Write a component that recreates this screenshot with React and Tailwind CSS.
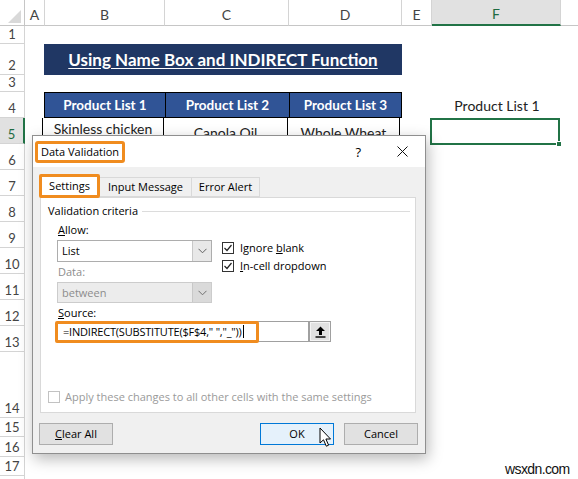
import React from 'react';

const ORANGE = 'border-[#f08c1f]';

const ColHead = ({ w, active, children }) => (
  <div
    className={`${w} shrink-0 flex items-end justify-center pb-[3px] leading-[14px] text-[14px] border-r border-[#d4d4d4] ${
      active ? 'bg-[#e1e1e1] border-b-2 border-b-[#217346] text-[#1e6b41]' : 'border-b border-b-[#c6c6c6] text-[#444]'
    }`}
  >
    {children}
  </div>
);

const Row = ({ n, h, active, children }) => (
  <div className={`flex ${h}`}>
    <div
      className={`w-[25px] shrink-0 flex items-end justify-center pb-[2px] text-[13px] leading-[14px] border-b border-b-[#d4d4d4] ${
        active ? 'bg-[#e1e1e1] border-r-2 border-r-[#217346] text-[#1e6b41]' : 'border-r border-r-[#d4d4d4] text-[#444]'
      }`}
    >
      {n}
    </div>
    {children}
  </div>
);

const Chevron = ({ color = '#606060' }) => (
  <svg width="9" height="6" viewBox="0 0 9 6">
    <path d="M0.5 0.8 L4.5 4.8 L8.5 0.8" fill="none" stroke={color} strokeWidth="1" />
  </svg>
);

const Check = ({ checked, disabled }) => (
  <span
    className={`w-[12px] h-[12px] shrink-0 flex items-center justify-center border ${
      disabled ? 'border-[#c2c2c2] bg-white' : 'border-[#333] bg-white'
    }`}
  >
    {checked && (
      <svg width="10" height="10" viewBox="0 0 10 10">
        <path d="M1.5 5 L4 7.5 L8.5 2" fill="none" stroke="#222" strokeWidth="1.2" />
      </svg>
    )}
  </span>
);

const Button = ({ primary, children }) => (
  <div
    className={`w-[74px] h-[22px] flex items-center justify-center border ${
      primary ? 'bg-[#e5f1fb] border-[#0078d7]' : 'bg-[#e1e1e1] border-[#adadad]'
    }`}
  >
    {children}
  </div>
);

const DataValidation = () => (
  <div className="absolute left-[32px] top-[135px] w-[394px] h-[319px] flex flex-col bg-[#f0f0f0] border border-[#8f8f8f] shadow-[2px_5px_14px_rgba(0,0,0,0.28)] font-['Open_Sans',sans-serif] text-[11px] leading-[14px] text-black">
    {/* title bar */}
    <div className="h-[31px] shrink-0 flex items-center bg-white pl-[2px] pr-[17px]">
      <span className={`h-[22px] flex items-center px-[3px] border-[3px] ${ORANGE} rounded-[3px]`}>
        Data Validation
      </span>
      <span className="ml-auto mr-[36px] text-[13px]">?</span>
      <svg width="11" height="11" viewBox="0 0 11 11">
        <path d="M0.5 0.5 L10.5 10.5 M10.5 0.5 L0.5 10.5" stroke="#111" strokeWidth="1" />
      </svg>
    </div>

    {/* tabs */}
    <div className="flex items-end h-[24px] mt-[7px] pl-[6px]">
      <div className={`relative z-10 w-[61px] h-[24px] flex items-center justify-center bg-white border-[3px] ${ORANGE} rounded-[2px]`}>
        Settings
      </div>
      <div className="w-[92px] h-[20px] flex items-center justify-center border border-[#d9d9d9] border-l-0 mb-px">
        Input Message
      </div>
      <div className="w-[68px] h-[20px] flex items-center justify-center border border-[#d9d9d9] border-l-0 mb-px">
        Error Alert
      </div>
    </div>

    {/* tab panel */}
    <div className="ml-[7px] w-[376px] h-[216px] -mt-px bg-white border border-[#d9d9d9] flex flex-col pt-[6px]">
      <div className="h-[14px] flex items-center pl-[7px]">
        <span>Validation criteria</span>
        <span className="flex-1 h-px bg-[#dcdcdc] ml-[4px] mr-[5px]" />
      </div>

      <div className="mt-[5px] h-[14px] pl-[17px]">
        <span className="underline">A</span>llow:
      </div>
      <div className="mt-[3px] flex pl-[16px]">
        <div className="w-[155px] h-[22px] flex border border-[#adadad] bg-white">
          <span className="flex-1 flex items-center pl-[4px]">List</span>
          <span className="w-[19px] flex items-center justify-center bg-[#e8e8e8] border-l border-[#c8c8c8]">
            <Chevron />
          </span>
        </div>
        <div className="ml-[10px] h-[22px] pt-[2px] flex flex-col gap-[6px]">
          <div className="h-[12px] flex items-center gap-[6px]">
            <Check checked />
            <span>
              Ignore <span className="underline">b</span>lank
            </span>
          </div>
          <div className="h-[12px] flex items-center gap-[6px]">
            <Check checked />
            <span>
              <span className="underline">I</span>n-cell dropdown
            </span>
          </div>
        </div>
      </div>

      <div className="mt-[3px] h-[14px] pl-[17px] text-[#8d8d8d]">Data:</div>
      <div className="mt-[3px] pl-[16px]">
        <div className="w-[155px] h-[21px] flex border border-[#cccccc] bg-[#ececec] text-[#8d8d8d]">
          <span className="flex-1 flex items-center pl-[4px]">between</span>
          <span className="w-[19px] flex items-center justify-center bg-[#dadada] border-l border-[#c8c8c8]">
            <Chevron color="#707070" />
          </span>
        </div>
      </div>

      <div className="mt-[3px] h-[14px] pl-[17px]">
        <span className="underline">S</span>ource:
      </div>
      <div className="relative mt-[1px] flex pl-[16px] h-[21px]">
        <div className="w-[252px] h-[21px] flex items-center pl-[5px] border border-[#a0a0a0] bg-white tracking-[-0.2px]">
          =INDIRECT(SUBSTITUTE($F$4," ","_"))
          <span className="ml-px w-px h-[13px] bg-black" />
        </div>
        <div className="w-[22px] h-[21px] flex items-center justify-center bg-[#e1e1e1] border border-[#a0a0a0] shadow-[inset_0_0_0_1px_#f4f4f4]">
          <svg width="11" height="12" viewBox="0 0 11 12">
            <path d="M5.5 0.5 L10 5 H7 V9 H4 V5 H1 Z" fill="#000" />
            <rect x="0.5" y="10.3" width="10" height="1.4" fill="#000" />
          </svg>
        </div>
        <span className={`absolute left-[14px] top-0 w-[204px] h-[22px] border-[3px] ${ORANGE} rounded-[2px]`} />
      </div>

      <div className="mt-[49px] h-[12px] flex items-center gap-[5px] pl-[7px] text-[#9a9a9a]">
        <Check disabled />
        <span>Apply these changes to all other cells with the same settings</span>
      </div>
    </div>

    {/* buttons */}
    <div className="mt-[10px] flex px-[6px]">
      <Button>
        <span>
          <span className="underline">C</span>lear All
        </span>
      </Button>
      <div className="ml-auto flex gap-[10px] pr-[1px]">
        <Button primary>OK</Button>
        <Button>Cancel</Button>
      </div>
    </div>
  </div>
);

export default function App() {
  return (
    <div className="relative w-[578px] h-[479px] overflow-hidden bg-white font-[Lato,sans-serif]">
      {/* column headers */}
      <div className="flex h-[26px]">
        <div className="w-[25px] shrink-0 flex items-end justify-end pr-[3px] pb-[2px] border-r border-b border-[#c6c6c6]">
          <svg width="13" height="13" viewBox="0 0 13 13">
            <path d="M13 0 L13 13 L0 13 Z" fill="#d9d9d9" />
          </svg>
        </div>
        <ColHead w="w-[20px]">A</ColHead>
        <ColHead w="w-[120px]">B</ColHead>
        <ColHead w="w-[124px]">C</ColHead>
        <ColHead w="w-[113px]">D</ColHead>
        <ColHead w="w-[30px]">E</ColHead>
        <ColHead w="w-[129px]" active>F</ColHead>
        <div className="flex-1 border-b border-[#c6c6c6]" />
      </div>

      <Row n={1} h="h-[18px]" />
      <Row n={2} h="h-[31px]">
        <div className="w-[19px]" />
        <div className="w-[358px] flex items-center justify-center bg-[#203764] text-white font-bold text-[17px] underline underline-offset-2">
          Using Name Box and INDIRECT Function
        </div>
      </Row>
      <Row n={3} h="h-[17px]" />
      <Row n={4} h="h-[26px]">
        <div className="w-[19px]" />
        <div className="w-[121px] flex items-center justify-center bg-[#305496] text-white font-bold text-[13.5px] border border-black border-r-0">
          Product List 1
        </div>
        <div className="w-[124px] flex items-center justify-center bg-[#305496] text-white font-bold text-[13.5px] border border-black border-r-0">
          Product List 2
        </div>
        <div className="w-[113px] flex items-center justify-center bg-[#305496] text-white font-bold text-[13.5px] border border-black">
          Product List 3
        </div>
        <div className="w-[30px]" />
        <div className="w-[130px] flex items-end justify-center pb-[2px] text-[14px] text-[#222]">Product List 1</div>
      </Row>
      <Row n={5} h="h-[26px]" active>
        <div className="w-[17px]" />
        <div className="w-[121px] text-center pt-[3px] text-[14px] leading-[16px] text-[#222] border-l border-black">
          Skinless chicken
        </div>
        <div className="w-[124px] text-center pt-[7px] text-[14px] leading-[16px] text-[#222] border-l border-black">
          Canola Oil
        </div>
        <div className="w-[113px] text-center pt-[7px] text-[14px] leading-[16px] text-[#222] border-x border-black">
          Whole Wheat
        </div>
        <div className="w-[30px]" />
        <div className="relative w-[130px] h-[27px] border-2 border-[#217346]">
          <span className="absolute -right-[4px] -bottom-[4px] w-[6px] h-[6px] bg-[#217346] border border-white" />
        </div>
      </Row>
      <Row n={6} h="h-[26px]" />
      <Row n={7} h="h-[26px]" />
      <Row n={8} h="h-[26px]" />
      <Row n={9} h="h-[26px]" />
      <Row n={10} h="h-[26px]" />
      <Row n={11} h="h-[26px]" />
      <Row n={12} h="h-[26px]" />
      <Row n={13} h="h-[26px]" />
      <Row n={14} h="h-[66px]" />
      <Row n={15} h="h-[19px]" />
      <Row n={16} h="h-[20px]" />
      <Row n={17} h="h-[19px]" />
      <Row h="h-[20px]" />

      <DataValidation />

      {/* mouse pointer */}
      <svg className="absolute left-[319px] top-[427px]" width="14" height="21" viewBox="0 0 14 21">
        <path d="M1 1 L1 16 L4.5 12.8 L7.3 19.2 L9.6 18.2 L6.9 12 L11.5 12 Z" fill="#fff" stroke="#000" strokeWidth="1" strokeLinejoin="round" />
      </svg>

      <span className="absolute left-[505px] top-[459px] font-['Liberation_Sans',sans-serif] text-[14px] tracking-[-0.6px] text-[#111]">
        wsxdn.com
      </span>
    </div>
  );
}
